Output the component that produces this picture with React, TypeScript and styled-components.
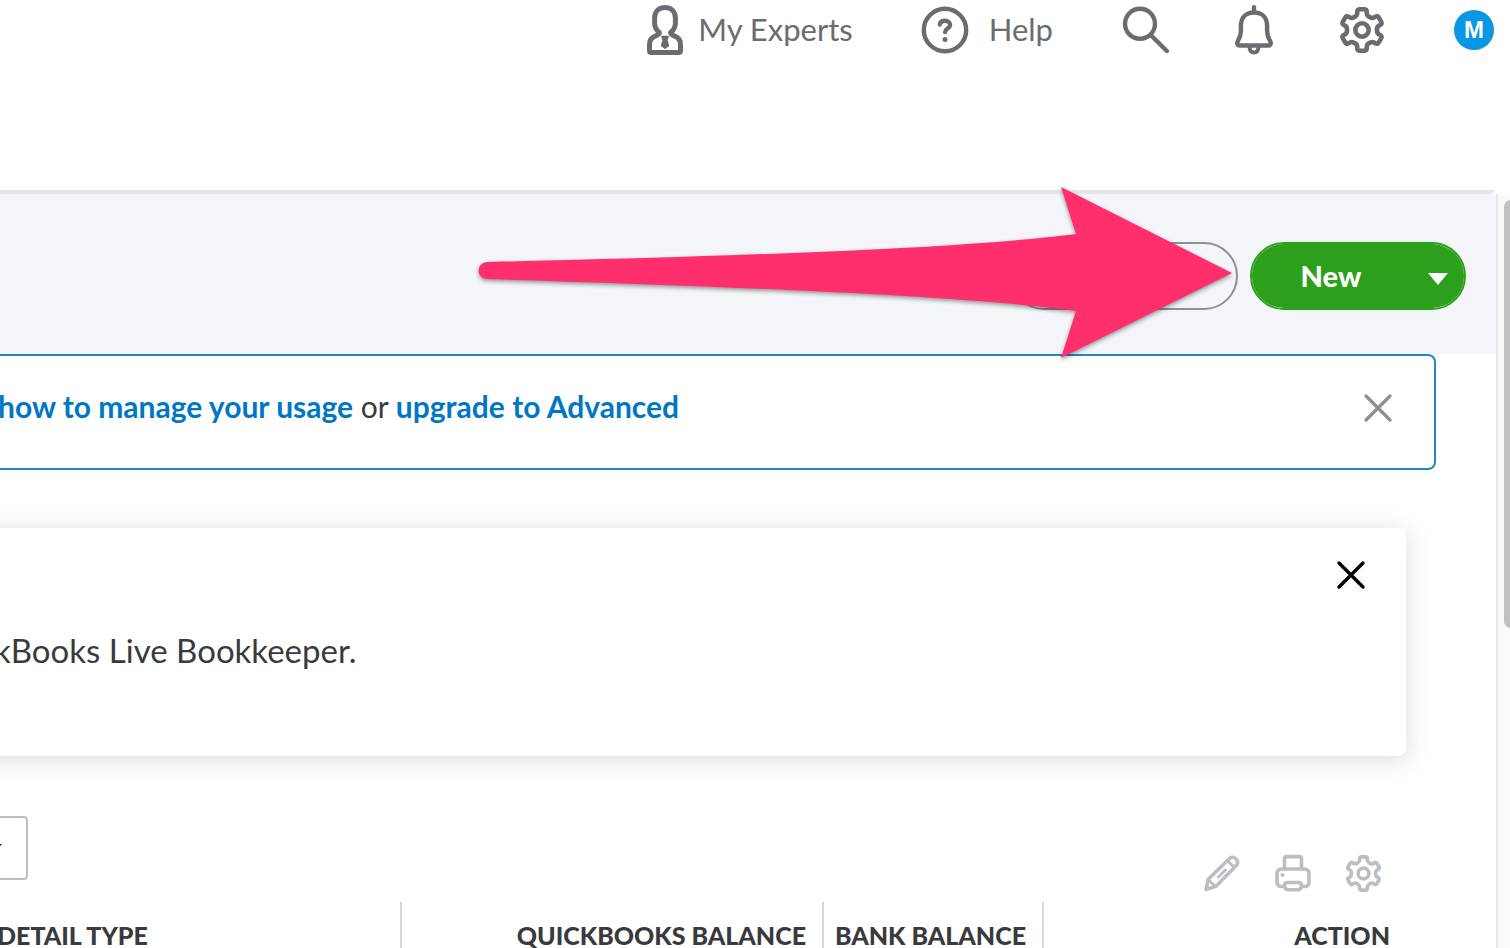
import React from 'react';
import styled, { createGlobalStyle } from 'styled-components';

const GlobalStyle = createGlobalStyle`
  *, *::before, *::after { box-sizing: border-box; }
  body { margin: 0; background: #fff; color: #393a3d; font-family: Lato, "Open Sans", sans-serif; }
  button { margin: 0; padding: 0; border: 0; background: none; font: inherit; color: inherit; cursor: pointer; }
  svg { display: block; }
`;

type Point = [number, number];

/* Closed outline through the points, each corner rounded by the given distance. */
function roundedOutline(points: Point[], radius: number): string {
  const toward = (a: Point, b: Point): Point => {
    const length = Math.hypot(b[0] - a[0], b[1] - a[1]);
    const t = Math.min(radius, length / 2) / length;
    return [a[0] + (b[0] - a[0]) * t, a[1] + (b[1] - a[1]) * t];
  };
  const show = (p: Point) => `${p[0].toFixed(2)} ${p[1].toFixed(2)}`;
  return (
    points
      .map((p, i) => {
        const prev = points[(i + points.length - 1) % points.length];
        const next = points[(i + 1) % points.length];
        return `${i === 0 ? 'M' : 'L'}${show(toward(p, prev))}Q${show(p)} ${show(toward(p, next))}`;
      })
      .join('') + 'Z'
  );
}

const polar = (radius: number, degrees: number): Point => {
  const a = (degrees * Math.PI) / 180;
  return [24 + radius * Math.sin(a), 24 - radius * Math.cos(a)];
};

const gearPath = roundedOutline(
  [0, 60, 120, 180, 240, 300].flatMap((a): Point[] => [
    polar(16, a - 18),
    polar(22.2, a - 13),
    polar(22.2, a + 13),
    polar(16, a + 18),
  ]),
  2.6,
);

const Icon = styled.svg`
  flex: none;
  fill: none;
  stroke: currentColor;
  stroke-linecap: round;
  stroke-linejoin: round;
`;

const Page = styled.div`
  height: 100vh;
  display: flex;
  flex-direction: column;
  overflow: hidden;
`;

const Header = styled.header`
  flex: none;
  height: 194px;
  margin-right: 16px;
  border-bottom: 4px solid #e3e5e8;
  border-bottom-right-radius: 4px;
`;

const HeaderNav = styled.nav`
  height: 60px;
  display: flex;
  align-items: center;
  justify-content: flex-end;
  gap: 65px;
  color: #6b6c72;
`;

const NavButton = styled.button<{ $gap?: number }>`
  display: flex;
  align-items: center;
  gap: ${(p) => p.$gap ?? 0}px;
`;

const NavLabel = styled.span`
  padding: 0 3px 2px 0;
  font-size: 31px;
  line-height: 40px;
`;

const Avatar = styled.button`
  width: 40px;
  height: 40px;
  margin-left: 4px;
  border-radius: 50%;
  background: #0997e5;
  color: #fff;
  font: bold 24px/40px "Liberation Sans", sans-serif;
`;

const Body = styled.div`
  flex: 1;
  min-height: 0;
  display: flex;
`;

const Main = styled.main`
  flex: 1;
  min-width: 0;
`;

const ScrollTrack = styled.div`
  flex: none;
  width: 14px;
  padding: 6px 0 0 6px;
  border-left: 2px solid #e8e8e8;
  background: #fafafa;
  overflow: hidden;
`;

const ScrollThumb = styled.div`
  width: 14px;
  height: 428px;
  border-radius: 7px;
  background: #c1c1c1;
`;

const Toolbar = styled.section`
  position: relative;
  display: flex;
  justify-content: flex-end;
  gap: 12px;
  height: 160px;
  padding: 48px 30px 44px;
  background: #f4f5f8;
`;

const OutlineButton = styled.button`
  width: 228px;
  height: 68px;
  border: 2px solid #8d9096;
  border-radius: 34px;
`;

const SplitButton = styled.div`
  display: flex;
  width: 216px;
  height: 68px;
  border: 2px solid #2ca01c;
  border-radius: 34px;
  background: #2ca01c;
  background-clip: padding-box;
  color: #fff;
`;

const SplitMain = styled.button`
  flex: 1;
  padding: 0 2px 2px 0;
  font-size: 29px;
  font-weight: 900;
`;

const SplitCaret = styled.button`
  display: flex;
  align-items: center;
  justify-content: center;
  width: 52px;
  padding-top: 6px;
`;

const Arrow = styled.svg`
  position: absolute;
  top: -10px;
  right: 260px;
  z-index: 1;
  overflow: visible;
  pointer-events: none;
  filter: drop-shadow(0 2px 2px rgba(0, 0, 0, 0.4));
`;

const Banner = styled.section`
  display: flex;
  align-items: flex-start;
  justify-content: space-between;
  height: 116px;
  margin: 0 60px 0 -2px;
  padding: 30px 41px 0 0;
  border: 2px solid #1f88c6;
  border-left: 0;
  border-radius: 0 8px 8px 0;
`;

const BannerText = styled.p`
  margin: 0;
  font-size: 30px;
  line-height: 40px;
  white-space: nowrap;
`;

const BannerLink = styled.a`
  color: #0077c5;
  font-weight: 700;
  text-decoration: none;
`;

const Card = styled.section`
  height: 228px;
  margin: 58px 90px 0 -40px;
  padding: 32px 40px 0 34px;
  border-radius: 8px;
  box-shadow: 0 4px 24px rgba(57, 58, 61, 0.18);
`;

const CardTop = styled.div`
  display: flex;
  justify-content: flex-end;
`;

const CardText = styled.p`
  margin: 40px 0 0;
  font-size: 33px;
  line-height: 40px;
  white-space: nowrap;
`;

const CloseButton = styled.button<{ $color: string }>`
  display: flex;
  color: ${(p) => p.$color};
`;

const BannerClose = styled(CloseButton)`
  padding-top: 7px;
`;

const Filters = styled.div`
  display: flex;
  justify-content: space-between;
  align-items: flex-start;
  margin-top: 60px;
  height: 86px;
  padding-right: 114px;
`;

const SelectBox = styled.div`
  position: relative;
  width: 28px;
  height: 64px;
`;

const Select = styled.select`
  position: absolute;
  right: 0;
  width: 220px;
  height: 64px;
  appearance: none;
  border: 2px solid #babec5;
  border-radius: 4px;
  background: #fff;
  font: 24px Lato, sans-serif;
`;

const SelectCaret = styled.svg`
  position: absolute;
  right: 26px;
  top: 28px;
  fill: #393a3d;
  pointer-events: none;
`;

const TableTools = styled.div`
  display: flex;
  gap: 33px;
  padding-top: 38px;
  color: #babec5;
`;

const Table = styled.table`
  width: calc(100% - 87px);
  margin-left: -3px;
  table-layout: fixed;
  border-collapse: separate;
  border-spacing: 0;
`;

const HeadCell = styled.th<{ $width?: number; $align?: string }>`
  width: ${(p) => (p.$width ? `${p.$width}px` : 'auto')};
  height: 66px;
  padding: 0 16px 0 0;
  border-right: 2px solid #d4d7dc;
  font-size: 25px;
  line-height: 32px;
  font-weight: 900;
  text-align: ${(p) => p.$align ?? 'right'};
  white-space: nowrap;
  &:last-child { border-right: 0; }
`;

const GearIcon = ({ size }: { size: number }) => (
  <Icon width={size} height={size} viewBox="0 0 48 48" strokeWidth="4.8">
    <path d={gearPath} />
    <circle cx="24" cy="24" r="7" />
  </Icon>
);

const CloseIcon = ({ size }: { size: number }) => (
  <Icon width={size} height={size} viewBox="0 0 30 30" strokeWidth="3.4">
    <path d="M3 3l24 24M27 3L3 27" />
  </Icon>
);

export default function App() {
  return (
    <>
      <GlobalStyle />
      <Page>
        <Header>
          <HeaderNav aria-label="Account">
            <NavButton $gap={15}>
              <Icon width="36" height="50" viewBox="0 0 36 50" strokeWidth="5">
                <path d="M12.400 27.500C9 25 7.600 22 7.600 18v-5C7.600 6.600 11.600 2.600 18 2.600S28.400 6.600 28.400 13v5c0 4-1.400 7-4.800 9.500 .3 1.900 1.700 2.600 3.700 3.300 4.200 1.400 6.200 4.500 6.200 9v5.600c0 1.400-.7 2.100-2.100 2.100H4.600c-1.400 0-2.100-.7-2.100-2.100V39.800c0-4.500 2-7.600 6.200-9 2-.7 3.400-1.400 3.700-3.300Z" />
                <path d="M14.800 31.500h6.400l-1.400 3.700 1.700 5.500L18 43.300l-3.500-2.600 1.700-5.500Z" fill="currentColor" strokeWidth="1.400" />
              </Icon>
              <NavLabel>My Experts</NavLabel>
            </NavButton>
            <NavButton $gap={20}>
              <Icon width="48" height="48" viewBox="0 0 48 48" strokeWidth="4.400">
                <circle cx="24" cy="24" r="21.200" />
                <path d="M18.800 18.600c.3-2.500 2.300-3.800 5.100-3.800 3.100 0 5.200 1.600 5.200 4.100 0 3.600-5 3.600-5 7.100" />
                <circle cx="24" cy="33.500" r="2.500" fill="currentColor" stroke="none" />
              </Icon>
              <NavLabel>Help</NavLabel>
            </NavButton>
            <NavButton aria-label="Search">
              <Icon width="48" height="48" viewBox="0 0 48 48" strokeWidth="4.400">
                <circle cx="19" cy="17.800" r="15" />
                <path d="M30 29.300l15.800 15.700" />
              </Icon>
            </NavButton>
            <NavButton aria-label="Notifications">
              <Icon width="40" height="50" viewBox="0 0 40 50" strokeWidth="4.400">
                <path d="M20 2.300v5M6.900 21C6.900 12.500 12 7.500 20 7.500S33.100 12.500 33.100 21v5c0 5 1.200 7 3 10 1.300 2.600.6 4.500-1.800 4.500H5.700c-2.400 0-3.100-1.900-1.800-4.500 1.800-3 3-5 3-10Z" />
                <path d="M15.600 42.500c0 3 1.700 5 4.400 5s4.400-2 4.400-5" strokeWidth="4" />
              </Icon>
            </NavButton>
            <NavButton aria-label="Settings">
              <GearIcon size={46} />
            </NavButton>
            <Avatar aria-label="Profile">M</Avatar>
          </HeaderNav>
        </Header>
        <Body>
          <Main>
            <Toolbar>
              <OutlineButton aria-label="Run report" />
              <SplitButton>
                <SplitMain>New</SplitMain>
                <SplitCaret aria-label="More options">
                  <svg width="20" height="12" viewBox="0 0 20 12" fill="currentColor">
                    <path d="M0 0h20L10 12Z" />
                  </svg>
                </SplitCaret>
              </SplitButton>
              <Arrow width="760" height="180" viewBox="476 184 760 180" fill="#ff2e6c" aria-hidden="true">
                <path d="M487 262C700 257 950 250 1076 234L1061 187 1232 273 1061 358 1076 311C950 294 700 286 487 279A8.500 8.500 0 0 1 487 262Z" />
              </Arrow>
            </Toolbar>
            <Banner>
              <BannerText>
                <BannerLink href="#usage">how to manage your usage</BannerLink> or{' '}
                <BannerLink href="#upgrade">upgrade to Advanced</BannerLink>
              </BannerText>
              <BannerClose $color="#8d9096" aria-label="Dismiss">
                <CloseIcon size={30} />
              </BannerClose>
            </Banner>
            <Card>
              <CardTop>
                <CloseButton $color="#000" aria-label="Close">
                  <CloseIcon size={30} />
                </CloseButton>
              </CardTop>
              <CardText>kBooks Live Bookkeeper.</CardText>
            </Card>
            <Filters>
              <SelectBox>
                <Select aria-label="Filter accounts" />
                <SelectCaret width="16" height="10" viewBox="0 0 16 10">
                  <path d="M0 0h16L8 10Z" />
                </SelectCaret>
              </SelectBox>
              <TableTools>
                <NavButton aria-label="Edit">
                  <Icon width="38" height="38" viewBox="-1 -1 38 38" strokeWidth="3.600">
                    <path d="M2 34.500L4.200 24.300 25 4c2.200-2.300 4.800-2.300 7 0s2.200 4.600 0 6.800L12 31.300Z" />
                    <path d="M23.500 5.500l7 7M4.500 25l7 6.500" strokeWidth="3" />
                    <path d="M14.300 22l7.200-7" strokeWidth="2.800" />
                  </Icon>
                </NavButton>
                <NavButton aria-label="Print">
                  <Icon width="38" height="38" viewBox="-1 -1 38 38" strokeWidth="3.600">
                    <path d="M9.500 13.500V4c0-1.600.8-2.400 2.400-2.400h12.200c1.600 0 2.400.8 2.400 2.400v9.500" />
                    <path d="M9 31.500H6.800C3.600 31.500 2 29.900 2 26.700v-8C2 15.500 3.600 14 6.800 14h22.400c3.200 0 4.800 1.500 4.800 4.700v8c0 3.200-1.600 4.800-4.800 4.800H27" />
                    <path d="M12.500 27.500h11c2 0 3 1 3 2.800 0 3-1.500 4.500-4 4.500h-9c-2.500 0-4-1.500-4-4.500 0-1.800 1-2.800 3-2.800Z" />
                    <circle cx="7.500" cy="20" r="2" fill="currentColor" stroke="none" />
                  </Icon>
                </NavButton>
                <NavButton aria-label="Table settings">
                  <GearIcon size={37} />
                </NavButton>
              </TableTools>
            </Filters>
            <Table>
              <thead>
                <tr>
                  <HeadCell scope="col" $align="left">DETAIL TYPE</HeadCell>
                  <HeadCell scope="col" $width={422}>QUICKBOOKS BALANCE</HeadCell>
                  <HeadCell scope="col" $width={220}>BANK BALANCE</HeadCell>
                  <HeadCell scope="col" $width={362}>ACTION</HeadCell>
                </tr>
              </thead>
            </Table>
          </Main>
          <ScrollTrack>
            <ScrollThumb />
          </ScrollTrack>
        </Body>
      </Page>
    </>
  );
}
